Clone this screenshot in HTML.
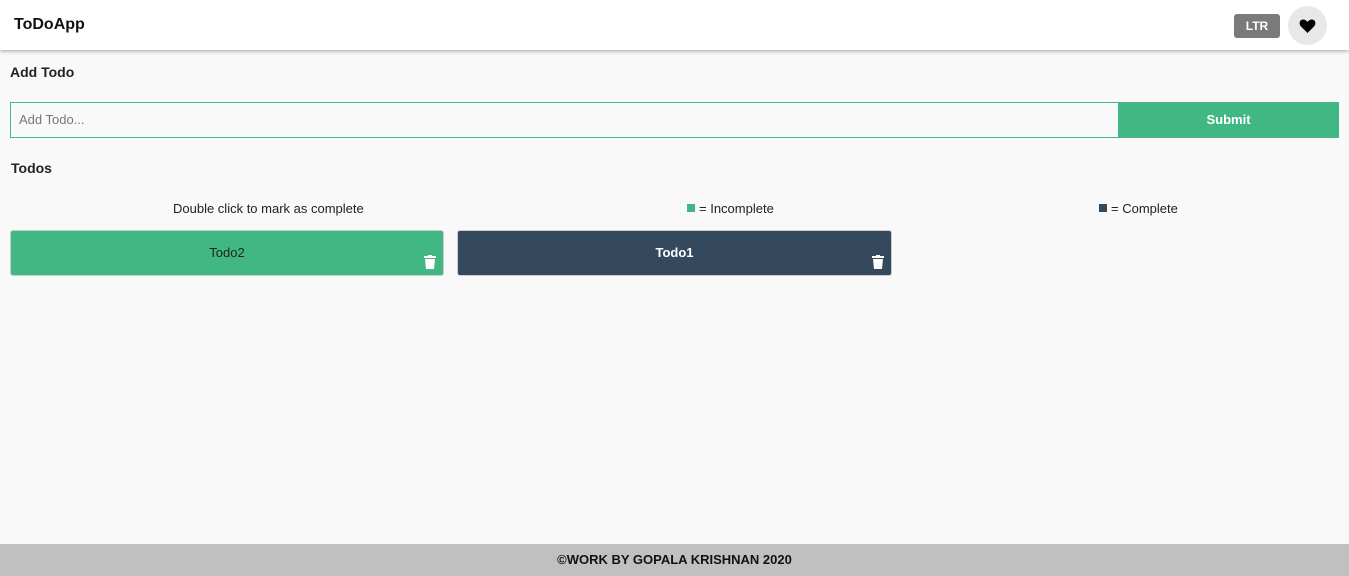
<!DOCTYPE html><html><head><style>
body{margin:0;width:1349px;height:576px;background:#f9f9f9;font-family:"Liberation Sans",sans-serif;position:relative;overflow:hidden}
.hdr{position:absolute;left:0;top:0;width:1349px;height:50px;background:#fff;box-shadow:0 1px 4px rgba(0,0,0,.35)}
.a{position:absolute}
</style></head><body>
<div class="hdr">
<div class="a" style="left:14px;top:16px;font-size:16px;font-weight:bold;color:#111">ToDoApp</div>
<div class="a" style="left:1234px;top:14px;width:46px;height:24px;background:#7a7a7a;border-radius:3px;color:#fff;font-size:12px;font-weight:bold;text-align:center;line-height:24px">LTR</div>
<div class="a" style="left:1288px;top:6px;width:39px;height:39px;border-radius:50%;background:#e8e8e8"><svg width="39" height="39" viewBox="0 0 39 39"><path d="M19.5 27 L13 20.5 C10.5 18 11.5 13.5 15 13.5 C17 13.5 18.5 14.5 19.5 16 C20.5 14.5 22 13.5 24 13.5 C27.5 13.5 28.5 18 26 20.5 Z" fill="#000"/></svg></div>
</div>
<div class="a" style="left:10px;top:64px;font-size:14px;font-weight:bold;color:#222">Add Todo</div>
<div class="a" style="left:10px;top:102px;width:1107px;height:34px;border:1px solid #41b883;border-right:none;background:#f9f9f9;font-size:13px;color:#777;line-height:34px;box-sizing:content-box"><span style="margin-left:8px">Add Todo...</span></div>
<div class="a" style="left:1118px;top:102px;width:221px;height:36px;background:#41b883;color:#fff;font-size:13px;font-weight:bold;text-align:center;line-height:36px">Submit</div>
<div class="a" style="left:11px;top:160px;font-size:14px;font-weight:bold;color:#222">Todos</div>
<div class="a" style="left:173px;top:201px;font-size:13px;color:#222">Double click to mark as complete</div>
<div class="a" style="left:687px;top:204px;width:8px;height:8px;background:#41b883"></div>
<div class="a" style="left:699px;top:201px;font-size:13px;color:#222">= Incomplete</div>
<div class="a" style="left:1099px;top:204px;width:8px;height:8px;background:#34495e"></div>
<div class="a" style="left:1111px;top:201px;font-size:13px;color:#222">= Complete</div>
<div class="a" style="left:10px;top:230px;width:432px;height:44px;background:#41b883;border:1px solid #ccc;border-radius:3px;color:#222;font-size:13px;text-align:center;line-height:44px">Todo2</div>
<div class="a" style="left:457px;top:230px;width:433px;height:44px;background:#34495e;border:1px solid #ccc;border-radius:3px;color:#fff;font-size:13px;font-weight:bold;text-align:center;line-height:44px">Todo1</div>
<svg class="a" style="left:424px;top:255px" width="12" height="14" viewBox="0 0 12 14"><rect x="0" y="1" width="12" height="2" fill="#fff"/><rect x="4" y="0" width="4" height="2" fill="#fff"/><path d="M1 4h10l-1 10H2z" fill="#fff"/></svg>
<svg class="a" style="left:872px;top:255px" width="12" height="14" viewBox="0 0 12 14"><rect x="0" y="1" width="12" height="2" fill="#fff"/><rect x="4" y="0" width="4" height="2" fill="#fff"/><path d="M1 4h10l-1 10H2z" fill="#fff"/></svg>
<div class="a" style="left:0;top:544px;width:1349px;height:32px;background:#c0c0c0;text-align:center;line-height:32px;font-size:13px;font-weight:bold;color:#111">©WORK BY GOPALA KRISHNAN 2020</div>
</body></html>
